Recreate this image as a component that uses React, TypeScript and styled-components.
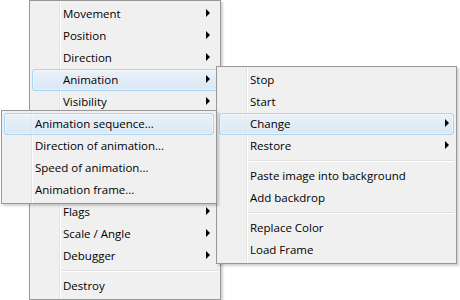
import React from "react";
import styled, { createGlobalStyle, css } from "styled-components";

const GlobalStyle = createGlobalStyle`
  html, body {
    margin: 0;
    padding: 0;
    background: #fff;
  }
  body {
    font-family: "Open Sans", "Noto Sans", sans-serif;
    font-size: 11.5px;
    color: #000;
  }
`;

const Stage = styled.div`
  position: relative;
  width: 460px;
  height: 300px;
  overflow: hidden;
`;

// Win7 style popup: grey frame, flat #f0f0f0 fill, icon gutter line
const Menu = styled.ul<{ $width: number }>`
  list-style: none;
  margin: 0;
  padding: 2px;
  box-sizing: border-box;
  width: ${(p) => p.$width}px;
  border: 1px solid #979797;
  background: linear-gradient(
      to right,
      transparent 29px,
      #e2e3e3 29px,
      #e2e3e3 30px,
      #fff 30px,
      #fff 31px,
      transparent 31px
    ),
    #f0f0f0;
  box-shadow: 2px 2px 2px rgba(0, 0, 0, 0.18);
`;

const RootMenu = styled(Menu)`
  margin-left: 29px;
`;

const Submenu = styled(Menu)<{ $x: number; $y: number }>`
  position: absolute;
  left: ${(p) => p.$x}px;
  top: ${(p) => p.$y}px;
`;

const Item = styled.li<{ $active?: boolean; $arrowGap: number }>`
  display: flex;
  align-items: center;
  height: 22px;
  box-sizing: border-box;
  padding: 0 ${(p) => p.$arrowGap}px 2px 30px;
  border: 1px solid transparent;
  border-radius: 3px;
  white-space: nowrap;
  ${(p) =>
    p.$active &&
    css`
      border-color: #aad4ef;
      background: linear-gradient(
        rgba(232, 242, 252, 0.75),
        rgba(210, 228, 248, 0.75)
      );
      box-shadow: inset 0 0 0 1px rgba(255, 255, 255, 0.45);
    `}
`;

const Arrow = styled.span`
  margin-left: auto;
  width: 0;
  height: 0;
  border-top: 4px solid transparent;
  border-bottom: 4px solid transparent;
  border-left: 4px solid #000;
`;

const Separator = styled.li`
  height: 2px;
  margin: 3px 0 3px 30px;
  border-top: 1px solid #e0e0e0;
  box-sizing: border-box;
  background: #fff;
`;

type Entry = { label?: string; sub?: boolean; active?: boolean; sep?: boolean };

// entries 6-9 sit under the Change submenu, so they carry no label
const rootItems: Entry[] = [
  { label: "Movement", sub: true },
  { label: "Position", sub: true },
  { label: "Direction", sub: true },
  { label: "Animation", sub: true, active: true },
  { label: "Visibility", sub: true },
  { sub: true },
  { sub: true },
  { sub: true },
  { sub: true },
  { label: "Flags", sub: true },
  { label: "Scale / Angle", sub: true },
  { label: "Debugger", sub: true },
  { sep: true },
  { label: "Destroy" },
];

const animationItems: Entry[] = [
  { label: "Stop" },
  { label: "Start" },
  { label: "Change", sub: true, active: true },
  { label: "Restore", sub: true },
  { sep: true },
  { label: "Paste image into background" },
  { label: "Add backdrop" },
  { sep: true },
  { label: "Replace Color" },
  { label: "Load Frame" },
];

const changeItems: Entry[] = [
  { label: "Animation sequence...", active: true },
  { label: "Direction of animation..." },
  { label: "Speed of animation..." },
  { label: "Animation frame..." },
];

const renderEntries = (entries: Entry[], arrowGap = 7) =>
  entries.map((e, i) =>
    e.sep ? (
      <Separator key={i} />
    ) : (
      <Item key={i} $active={e.active} $arrowGap={arrowGap}>
        {e.label}
        {e.sub && <Arrow />}
      </Item>
    )
  );

const App = () => (
  <>
    <GlobalStyle />
    <Stage>
      <RootMenu $width={192}>{renderEntries(rootItems)}</RootMenu>
      <Submenu $width={241} $x={216} $y={66}>
        {renderEntries(animationItems, 4)}
      </Submenu>
      <Submenu $width={216} $x={1} $y={110}>
        {renderEntries(changeItems)}
      </Submenu>
    </Stage>
  </>
);

export default App;
